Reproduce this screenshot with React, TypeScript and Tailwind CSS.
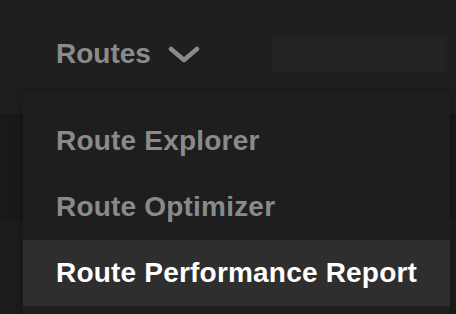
import React from "react";

export default function App() {
  return (
    <div
      className="relative w-[456px] h-[314px] overflow-hidden bg-[#1c1c1c]"
      style={{ fontFamily: '"Liberation Sans", Arial, sans-serif' }}
    >
      <header className="h-[114px] bg-[#1f1f1f] flex items-start">
        <button className="mt-[34px] ml-[56px] flex items-center gap-[17px] text-[28px] font-bold leading-[40px] text-[#8b8b8b]">
          <span>Routes</span>
          <svg width="32" height="18" viewBox="0 0 32 18" className="mt-[2px]">
            <path d="M3 3 L16 14 L29 3" fill="none" stroke="#8b8b8b" strokeWidth="4.5" strokeLinecap="round" strokeLinejoin="round" />
          </svg>
        </button>
        <div className="ml-auto mt-[35px] mr-[9px] w-[175px] h-[38px] bg-[#232323] blur-[1px]" />
      </header>
      <div className="h-[105px] bg-[#191919]" />
      <div className="absolute left-[23px] top-[92px] w-[427px] rounded-t-[4px] bg-[#1e1e1e] pt-[16px] pb-[10px] shadow-[0_0_12px_rgba(0,0,0,0.35)]">
        <div className="h-[66px] pl-[33px] flex items-center whitespace-nowrap text-[28px] font-bold tracking-[0.2px] text-[#8a8a8a]">Route Explorer</div>
        <div className="h-[66px] pl-[33px] flex items-center whitespace-nowrap text-[28px] font-bold tracking-[0.2px] text-[#8a8a8a]">Route Optimizer</div>
        <div className="h-[66px] pl-[33px] flex items-center whitespace-nowrap text-[28px] font-bold tracking-[0.2px] text-white bg-[#2e2e2e]">Route Performance Report</div>
      </div>
    </div>
  );
}
